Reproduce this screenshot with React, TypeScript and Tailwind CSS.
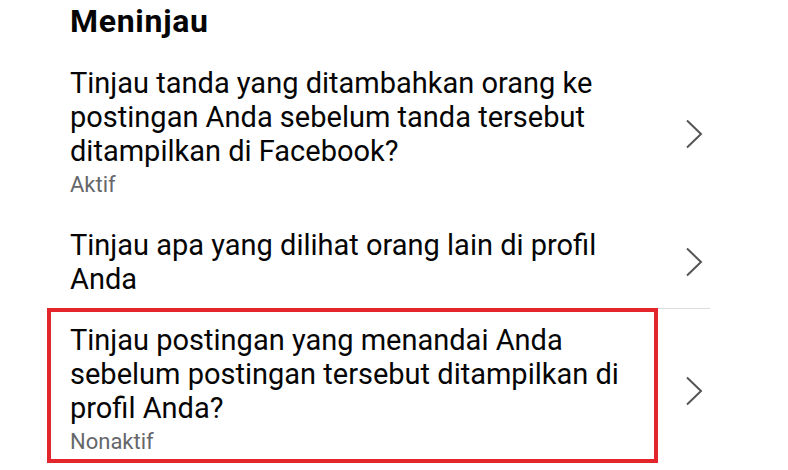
type Item = {
  title: string;
  status?: string;
};

const items: Item[] = [
  {
    title: "Tinjau tanda yang ditambahkan orang ke postingan Anda sebelum tanda tersebut ditampilkan di Facebook?",
    status: "Aktif",
  },
  {
    title: "Tinjau apa yang dilihat orang lain di profil Anda",
  },
];

const Chevron = () => (
  <svg width="18" height="30" viewBox="0 0 18 30" fill="none" className="shrink-0">
    <path d="M2 1.5 L16 15 L2 28.5" stroke="#555555" strokeWidth="2" />
  </svg>
);

const Row = ({ item }: { item: Item }) => (
  <div className="flex items-center">
    <div className="w-[570px]">
      <p className="text-[29px] leading-[34px]">{item.title}</p>
      {item.status && <p className="text-[22px] leading-[34px] text-[#65676b]">{item.status}</p>}
    </div>
    <div className="ml-auto mr-[85px]">
      <Chevron />
    </div>
  </div>
);

const App = () => {
  return (
    <div className="w-[788px] h-[470px] bg-white overflow-hidden font-['Roboto',sans-serif] text-[#050505]">
      <h1 className="pl-[70px] pt-[1px] text-[32px] font-bold leading-[40px] tracking-[0.7px]">Meninjau</h1>

      <div className="pl-[70px] pt-[25px] pb-[13px]">
        <Row item={items[0]} />
      </div>
      <div className="pl-[70px] pt-[13px] pb-[12px]">
        <Row item={items[1]} />
      </div>

      {/* divider + highlighted row */}
      <div className="relative">
        <div className="ml-[70px] w-[640px] border-t border-[#dadde1]" />
        <div className="pl-[70px] pt-[14px]">
          <Row item={{ title: "Tinjau postingan yang menandai Anda sebelum postingan tersebut ditampilkan di profil Anda?", status: "Nonaktif" }} />
        </div>
        <div className="absolute left-[47px] top-0 w-[611px] h-[155px] border-[4px] border-[#e3262b]" />
      </div>
    </div>
  );
};

export default App;
